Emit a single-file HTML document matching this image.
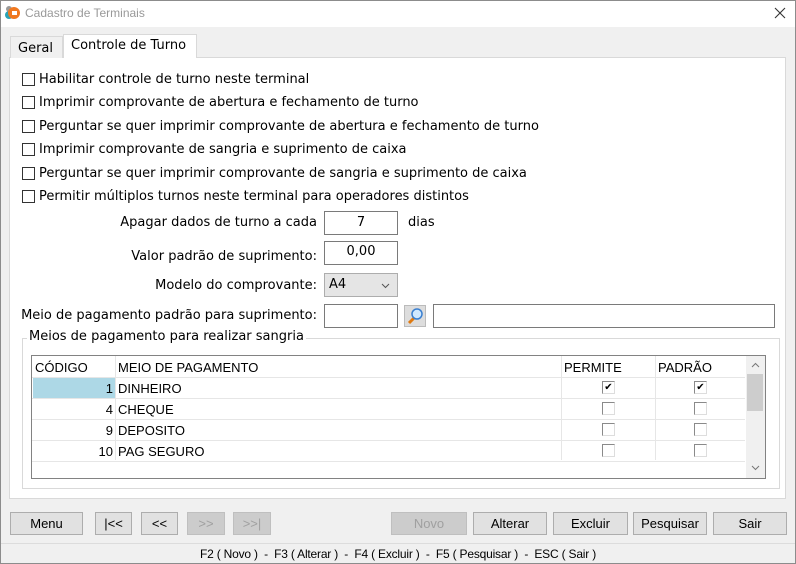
<!DOCTYPE html>
<html><head><meta charset="utf-8"><style>
*{box-sizing:border-box;margin:0;padding:0}
body{width:796px;height:564px;position:relative;background:#f0f0f0;font-family:"Liberation Sans","DejaVu Sans",sans-serif;font-size:13px;color:#000;overflow:hidden}
.a{position:absolute;white-space:nowrap}
.t{font-family:"DejaVu Sans",sans-serif;font-size:13px}
.l{margin-top:1px}
.cb{position:absolute;width:13px;height:13px;border:1px solid #333;background:#fff}
.inp{position:absolute;background:#fff;border:1px solid #7a7a7a;text-align:center;line-height:21px}
.btn{position:absolute;height:23px;top:512px;border:1px solid #adadad;background:#e1e1e1;text-align:center;line-height:21px}
.dis{color:#a0a0a0;background:#cccccc;border-color:#bfbfbf}
.gcb{position:absolute;width:13px;height:13px;border:1px solid #8a8a8a;border-right-color:#ddd;border-bottom-color:#ddd;background:#fff;font-size:10px;line-height:11px;text-align:center}
.hl{position:absolute;height:1px;background:#e6e6e6;left:32px;width:713px}
</style></head><body>
<div class="a" style="left:0;top:0;width:796px;height:564px;border:1px solid #8c8c8c"></div>
<div class="a" style="left:1px;top:1px;width:794px;height:26px;background:#fff"></div>
<svg class="a" style="left:4px;top:5px" width="16" height="15"><circle cx="5" cy="10" r="4" fill="#2aa3b5"/><circle cx="5" cy="4" r="3" fill="#999"/><circle cx="10" cy="8" r="6" fill="#f07820"/><rect x="8" y="6" width="5" height="4" fill="#fff"/></svg>
<div class="a" style="left:25px;top:6px;color:#999;font-size:12px">Cadastro de Terminais</div>
<svg class="a" style="left:774px;top:7px" width="12" height="12"><path d="M1 1L11 11M11 1L1 11" stroke="#333" stroke-width="1.1"/></svg>
<div class="a" style="left:9px;top:57px;width:777px;height:442px;background:#fff;border:1px solid #d9d9d9"></div>
<div class="a t" style="left:10px;top:36px;width:53px;height:22px;background:#f0f0f0;border:1px solid #d9d9d9;border-bottom:none;padding:4px 0 0 7px">Geral</div>
<div class="a t" style="left:63px;top:34px;width:134px;height:24px;background:#fff;border:1px solid #d9d9d9;border-bottom:none;padding:3px 0 0 7px">Controle de Turno</div>
<div class="cb" style="left:22px;top:73px"></div><div class="a t l" style="left:39px;top:71px">Habilitar controle de turno neste terminal</div>
<div class="cb" style="left:22px;top:96px"></div><div class="a t l" style="left:39px;top:94px">Imprimir comprovante de abertura e fechamento de turno</div>
<div class="cb" style="left:22px;top:120px"></div><div class="a t l" style="left:39px;top:118px">Perguntar se quer imprimir comprovante de abertura e fechamento de turno</div>
<div class="cb" style="left:22px;top:143px"></div><div class="a t l" style="left:39px;top:141px">Imprimir comprovante de sangria e suprimento de caixa</div>
<div class="cb" style="left:22px;top:167px"></div><div class="a t l" style="left:39px;top:165px">Perguntar se quer imprimir comprovante de sangria e suprimento de caixa</div>
<div class="cb" style="left:22px;top:190px"></div><div class="a t l" style="left:39px;top:188px">Permitir múltiplos turnos neste terminal para operadores distintos</div>
<div class="a t l" style="right:479px;top:214px">Apagar dados de turno a cada</div>
<div class="inp t" style="left:324px;top:211px;width:74px;height:24px">7</div>
<div class="a t l" style="left:408px;top:214px">dias</div>
<div class="a t l" style="right:479px;top:248px">Valor padrão de suprimento:</div>
<div class="inp t" style="left:324px;top:241px;width:74px;height:24px;line-height:20px">0,00</div>
<div class="a t l" style="right:479px;top:277px">Modelo do comprovante:</div>
<div class="inp t" style="left:324px;top:273px;width:74px;height:24px;background:#e5e5e5;border-color:#adadad;text-align:left;padding-left:4px">A4<svg style="position:absolute;right:7px;top:9px" width="9" height="6"><path d="M1 1L4.5 4.5L8 1" stroke="#555" fill="none"/></svg></div>
<div class="a t l" style="right:479px;top:307px">Meio de pagamento padrão para suprimento:</div>
<div class="inp" style="left:324px;top:304px;width:74px;height:24px"></div>
<div class="a" style="left:404px;top:305px;width:22px;height:22px;background:#ddd;border:1px solid #bbb"><svg width="20" height="20"><line x1="4" y1="17" x2="10" y2="11" stroke="#e07a10" stroke-width="3"/><circle cx="12" cy="8" r="5" fill="#cfe8ff" stroke="#3a7fd0" stroke-width="1.5"/></svg></div>
<div class="inp" style="left:433px;top:304px;width:342px;height:24px"></div>
<div class="a" style="left:22px;top:338px;width:758px;height:151px;border:1px solid #d9d9d9"></div>
<div class="a t" style="left:27px;top:329px;background:#fff;padding:0 2px">Meios de pagamento para realizar sangria</div>
<div class="a" style="left:31px;top:355px;width:735px;height:124px;border:1px solid #828282;background:#fff"></div>
<div class="a" style="left:35px;top:360px">CÓDIGO</div>
<div class="a" style="left:118px;top:360px">MEIO DE PAGAMENTO</div>
<div class="a" style="left:564px;top:360px">PERMITE</div>
<div class="a" style="left:658px;top:360px">PADRÃO</div>
<div class="a" style="left:115px;top:356px;width:1px;height:104px;background:#e6e6e6"></div>
<div class="a" style="left:561px;top:356px;width:1px;height:104px;background:#e6e6e6"></div>
<div class="a" style="left:655px;top:356px;width:1px;height:104px;background:#e6e6e6"></div>
<div class="hl" style="top:377px"></div><div class="hl" style="top:398px"></div><div class="hl" style="top:419px"></div><div class="hl" style="top:440px"></div><div class="hl" style="top:461px"></div>
<div class="a" style="left:33px;top:378px;width:82px;height:20px;background:#add8e6"></div>
<div class="a" style="right:683px;top:381px">1</div><div class="a" style="left:118px;top:381px">DINHEIRO</div>
<div class="a" style="right:683px;top:402px">4</div><div class="a" style="left:118px;top:402px">CHEQUE</div>
<div class="a" style="right:683px;top:423px">9</div><div class="a" style="left:118px;top:423px">DEPOSITO</div>
<div class="a" style="right:683px;top:444px">10</div><div class="a" style="left:118px;top:444px">PAG SEGURO</div>
<div class="gcb" style="left:602px;top:381px">✔</div><div class="gcb" style="left:694px;top:381px">✔</div>
<div class="gcb" style="left:602px;top:402px"></div><div class="gcb" style="left:694px;top:402px"></div>
<div class="gcb" style="left:602px;top:423px"></div><div class="gcb" style="left:694px;top:423px"></div>
<div class="gcb" style="left:602px;top:444px"></div><div class="gcb" style="left:694px;top:444px"></div>
<div class="a" style="left:746px;top:356px;width:19px;height:122px;background:#f0f0f0"></div>
<div class="a" style="left:747px;top:374px;width:16px;height:37px;background:#cdcdcd"></div>
<svg class="a" style="left:751px;top:362px" width="9" height="6"><path d="M1 5L4.5 1.5L8 5" stroke="#777" fill="none"/></svg>
<svg class="a" style="left:751px;top:465px" width="9" height="6"><path d="M1 1L4.5 4.5L8 1" stroke="#777" fill="none"/></svg>
<div class="btn" style="left:10px;width:73px">Menu</div>
<div class="btn" style="left:95px;width:37px">|&lt;&lt;</div>
<div class="btn" style="left:141px;width:37px">&lt;&lt;</div>
<div class="btn dis" style="left:187px;width:38px">&gt;&gt;</div>
<div class="btn dis" style="left:233px;width:38px">&gt;&gt;|</div>
<div class="btn dis" style="left:391px;width:76px">Novo</div>
<div class="btn" style="left:473px;width:74px">Alterar</div>
<div class="btn" style="left:553px;width:75px">Excluir</div>
<div class="btn" style="left:633px;width:74px">Pesquisar</div>
<div class="btn" style="left:713px;width:74px">Sair</div>
<div class="a" style="left:1px;top:543px;width:794px;height:1px;background:#dcdcdc"></div>
<div class="a" style="left:0;top:547px;width:796px;text-align:center;font-size:12px;letter-spacing:-0.2px">F2 ( Novo )&nbsp; - &nbsp;F3 ( Alterar )&nbsp; - &nbsp;F4 ( Excluir )&nbsp; - &nbsp;F5 ( Pesquisar )&nbsp; - &nbsp;ESC ( Sair )</div>
</body></html>
